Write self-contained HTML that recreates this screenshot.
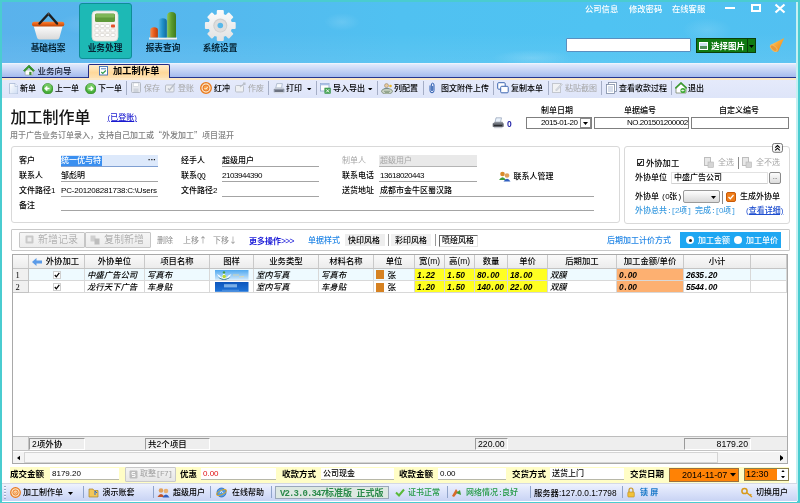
<!DOCTYPE html>
<html lang="zh-CN"><head><meta charset="utf-8"><title>加工制作单</title>
<style>
*{box-sizing:border-box;margin:0;padding:0}
html,body{width:800px;height:503px;overflow:hidden;background:#fff}
body{font-family:"Liberation Sans","Noto Sans CJK SC","DejaVu Sans",sans-serif;font-size:8px;color:#000;position:relative;line-height:10px;font-weight:500}
.a{position:absolute;white-space:nowrap}
.t{position:absolute;white-space:nowrap;font-size:8px;line-height:10px;height:10px}
.n{font-size:8px;letter-spacing:-.45px}
.m{font-family:"Liberation Mono",monospace;font-size:8px;letter-spacing:-.8px}
.d{font-size:8px;letter-spacing:0}
.p{display:inline-block;width:4.4px;text-align:center}
.q{font-family:"Noto Sans CJK SC",sans-serif;line-height:0}
.b{font-weight:bold}
.g{color:#a6a6a6;font-weight:400}
#win{position:absolute;left:0;top:0;width:800px;height:503px;background:#4accd0;overflow:hidden;will-change:transform}
#hdr{position:absolute;left:2px;top:2px;width:795px;height:61px;background:radial-gradient(ellipse 40px 12px at 95px 22px,rgba(255,255,255,.13),rgba(255,255,255,0)),radial-gradient(ellipse 18px 9px at 340px 20px,rgba(255,255,255,.13),rgba(255,255,255,0)),radial-gradient(ellipse 40px 8px at 530px 56px,rgba(255,255,255,.16),rgba(255,255,255,0)),radial-gradient(ellipse 25px 12px at 705px 28px,rgba(255,255,255,.12),rgba(255,255,255,0)),linear-gradient(rgba(255,255,255,0) 50%,rgba(255,255,255,.07)),linear-gradient(90deg,#5ab2ec,#55b8ee 25%,#50c1f1 50%,#4fc3f2 75%,#52c0f1)}
#tabbar{position:absolute;left:2px;top:62.7px;width:795px;height:15px;background:linear-gradient(#f4f8ff,#dde7fb 12%,#c0d0f4 55%,#a0b7ec)}
#tb{position:absolute;left:2px;top:78px;width:795px;height:20px;background:linear-gradient(#fde8c4,#fde8c4 1.500px,#e5eafb 2px,#dee5f9)}
.sep{position:absolute;width:1px;background:#a5aec6}
#content{position:absolute;left:2px;top:98px;width:795px;height:404px;background:#fff}
.ul{position:absolute;height:1px;background:#a4a4a4}
.box{position:absolute;border:1px solid #d9d9d9;border-radius:3px;background:#fff}
.inp{position:absolute;background:#fff;border:1px solid #7f7f7f}
.hc{position:absolute;top:255px;height:13px;background:linear-gradient(#fafafa,#ececec);border-right:1px solid #c9c9c9;text-align:center;font-size:8.4px;line-height:13px;white-space:nowrap;overflow:hidden}
.c{position:absolute;height:12.3px;font-size:8.4px;line-height:12.3px;white-space:nowrap;overflow:hidden;font-style:italic;padding-left:2px;border-right:1px solid #d8d8d8;border-bottom:1px solid #d8d8d8}
</style></head><body>
<div id="win">
<div id="hdr"></div>
<div class="a" style="left:79px;top:3px;width:53px;height:56px;background:#1db9b5;border:1px solid #0e8e96;border-radius:3px"></div>
<div class="t b" style="left:18px;top:43px;width:60px;text-align:center;font-size:8.7px;color:#062536">基础档案</div>
<div class="t b" style="left:75px;top:43px;width:60px;text-align:center;font-size:8.7px;color:#062536">业务处理</div>
<div class="t b" style="left:133px;top:43px;width:60px;text-align:center;font-size:8.7px;color:#062536">报表查询</div>
<div class="t b" style="left:190px;top:43px;width:60px;text-align:center;font-size:8.7px;color:#062536">系统设置</div>
<svg class="a" style="left:30px;top:9px" width="36" height="32" viewBox="0 0 36 32">
<defs><linearGradient id="bk" x1="0" y1="0" x2="0" y2="1"><stop offset="0" stop-color="#fdfdfd"/><stop offset="1" stop-color="#d9d9d9"/></linearGradient>
<linearGradient id="rm" x1="0" y1="0" x2="0" y2="1"><stop offset="0" stop-color="#f5843a"/><stop offset=".5" stop-color="#e85f14"/><stop offset="1" stop-color="#b9480c"/></linearGradient></defs>
<path d="M3.500 16.500 H32.800 L29.500 28.500 Q29 30.500 27 30.500 H9.500 Q7.500 30.500 7 28.500 Z" fill="url(#bk)"/>
<rect x="2" y="12.700" width="32.300" height="4.800" rx="2.200" fill="url(#rm)"/>
<path d="M9.500 14.500 L18.500 4.700 L27 14.500" fill="none" stroke="#1f1f1f" stroke-width="2.400" stroke-linejoin="round" stroke-linecap="round"/>
<circle cx="18.500" cy="4.700" r="1" fill="#555"/>
</svg>
<svg class="a" style="left:91px;top:10px" width="28" height="32" viewBox="0 0 28 32">
<rect x="1" y="1" width="26" height="30" rx="4" fill="#f4f2ee" stroke="#d8d5cf" stroke-width=".8"/>
<rect x="4" y="3.500" width="20" height="8.500" rx="1.500" fill="#5f9a3a"/>
<rect x="4.500" y="4" width="19" height="3.500" rx="1" fill="#7fb657"/>
<g fill="#fff" stroke="#c9c5be" stroke-width=".5">
<rect x="4" y="14.500" width="4" height="3" rx=".8"/><rect x="9.300" y="14.500" width="4" height="3" rx=".8"/><rect x="14.600" y="14.500" width="4" height="3" rx=".8"/>
<rect x="4" y="19" width="4" height="3" rx=".8"/><rect x="9.300" y="19" width="4" height="3" rx=".8"/><rect x="14.600" y="19" width="4" height="3" rx=".8"/><rect x="20" y="19" width="4" height="3" rx=".8"/>
<rect x="4" y="23.500" width="4" height="3" rx=".8"/><rect x="9.300" y="23.500" width="4" height="3" rx=".8"/><rect x="14.600" y="23.500" width="4" height="3" rx=".8"/><rect x="20" y="23.500" width="4" height="3" rx=".8"/>
</g>
<rect x="20" y="14.500" width="4" height="3" rx=".8" fill="#e2512a"/>
</svg>
<svg class="a" style="left:148px;top:10px" width="30" height="31" viewBox="0 0 30 31">
<defs><linearGradient id="b1" x1="0" y1="0" x2="1" y2="0"><stop offset="0" stop-color="#f58a4a"/><stop offset=".5" stop-color="#e85a1a"/><stop offset="1" stop-color="#b8400c"/></linearGradient>
<linearGradient id="b2" x1="0" y1="0" x2="1" y2="0"><stop offset="0" stop-color="#4fb4e4"/><stop offset=".5" stop-color="#1f8fc8"/><stop offset="1" stop-color="#146a9c"/></linearGradient>
<linearGradient id="b3" x1="0" y1="0" x2="1" y2="0"><stop offset="0" stop-color="#8ac452"/><stop offset=".5" stop-color="#5a9a2c"/><stop offset="1" stop-color="#3f7a1c"/></linearGradient></defs>
<rect x="1" y="27.500" width="28" height="2" fill="#f2f2f2"/><rect x="1" y="29.300" width="28" height=".7" fill="#b9c4cc"/>
<path d="M2.300 27.500 V20 Q2.300 17.200 6.100 17.200 Q9.900 17.200 9.900 20 V27.500Z" fill="url(#b1)"/>
<path d="M10.600 27.500 V11.500 Q10.600 8.200 14.700 8.200 Q18.800 8.200 18.800 11.500 V27.500Z" fill="url(#b2)"/>
<path d="M19.200 27.500 V5.500 Q19.200 1.900 23.600 1.900 Q28 1.900 28 5.500 V27.500Z" fill="url(#b3)"/>
</svg>
<svg class="a" style="left:204px;top:9px" width="33" height="33" viewBox="0 0 33 33">
<defs><linearGradient id="gg" x1="0" y1="0" x2="0" y2="1"><stop offset="0" stop-color="#fafafa"/><stop offset="1" stop-color="#e2e2e2"/></linearGradient></defs>
<path d="M30.68 13.99 L30.68 19.01 L27.00 19.07 L25.68 22.25 L28.24 24.90 L24.70 28.44 L22.05 25.88 L18.87 27.20 L18.81 30.88 L13.79 30.88 L13.73 27.20 L10.55 25.88 L7.90 28.44 L4.36 24.90 L6.92 22.25 L5.60 19.07 L1.92 19.01 L1.92 13.99 L5.60 13.93 L6.92 10.75 L4.36 8.10 L7.90 4.56 L10.55 7.12 L13.73 5.80 L13.79 2.12 L18.81 2.12 L18.87 5.80 L22.05 7.12 L24.70 4.56 L28.24 8.10 L25.68 10.75 L27.00 13.93Z" fill="url(#gg)" stroke="url(#gg)" stroke-width="2" stroke-linejoin="round"/>
<circle cx="16.300" cy="16.500" r="7" fill="#cfcfcf"/><circle cx="16.300" cy="16.800" r="6" fill="#dedede"/><circle cx="16.300" cy="16.500" r="2.800" fill="#58b8ea"/>
</svg>
<div class="t " style="left:585px;top:3.6px;color:#fff;font-size:8.3px">公司信息</div>
<div class="t " style="left:629px;top:3.6px;color:#fff;font-size:8.3px">修改密码</div>
<div class="t " style="left:672px;top:3.6px;color:#fff;font-size:8.3px">在线客服</div>
<div class="a" style="left:725px;top:7px;width:10px;height:2px;background:#fff"></div>
<div class="a" style="left:750.5px;top:3.5px;width:10.5px;height:8.5px;border:2px solid #fff"></div>
<svg class="a" style="left:774px;top:3px" width="12" height="11" viewBox="0 0 12 11"><path d="M1.500 1.500 L10.500 9.500 M10.500 1.500 L1.500 9.500" stroke="#fff" stroke-width="2.200"/></svg>
<div class="a" style="left:566px;top:38px;width:125px;height:14px;background:#fff;border:1px solid #5a8fc0;border-radius:1px"></div>
<div class="a" style="left:696px;top:38px;width:60px;height:14.500px;background:#107a12;border:1px solid #0a3f0c"></div>
<div class="a" style="left:746.5px;top:39px;width:1px;height:12.500px;background:#0a3f0c"></div>
<div class="a" style="left:698.500px;top:41.500px;width:9px;height:8px;background:#cfe0ee;border:1px solid #fff"><div style="position:absolute;left:0;bottom:0;width:7px;height:3px;background:#4f8f5a"></div></div>
<div class="t b" style="left:711px;top:40.5px;color:#fff;font-size:8.5px">选择图片</div>
<svg class="a" style="left:749px;top:44.500px" width="5" height="3"><path d="M0 0H5L2.500 3Z" fill="#000"/></svg>
<svg class="a" style="left:768px;top:36px" width="18" height="18" viewBox="0 0 18 18">
<defs><linearGradient id="cn" x1="0" y1="0" x2="1" y2="1"><stop offset="0" stop-color="#fde2a0"/><stop offset=".45" stop-color="#f7a93a"/><stop offset="1" stop-color="#e8841a"/></linearGradient></defs>
<path d="M16.300 2 L2.300 9 Q3 15 10 15.800 Z" fill="url(#cn)"/>
<ellipse cx="5.800" cy="12.200" rx="2.600" ry="4.600" transform="rotate(-48 5.800 12.200)" fill="#f5b55a"/>
<ellipse cx="5.800" cy="12.200" rx="1.600" ry="3.500" transform="rotate(-48 5.800 12.200)" fill="#e89a3a"/>
</svg>
<div id="tabbar"></div>
<div class="a" style="left:2px;top:77px;width:795px;height:1px;background:#24358f"></div>
<svg class="a" style="left:22.500px;top:63.500px" width="12" height="12" viewBox="0 0 12 12"><path d="M2.200 6 H9.800 V11 H2.200Z" fill="#fdfdfd" stroke="#9aa89a" stroke-width=".6"/><path d="M.4 6.600 L6 1 L11.600 6.600 L10.300 7.600 L6 3.400 L1.700 7.600Z" fill="#3aa02c" stroke="#2a7a20" stroke-width=".5"/><path d="M6 3.400 L9.800 7 V6 L6 2.200Z" fill="#2a7a20"/><rect x="6.300" y="7.800" width="2.200" height="3.200" fill="#3d8a30"/></svg>
<div class="t " style="left:37.5px;top:65.5px;font-size:8.5px;color:#10182c">业务向导</div>
<div class="a" style="left:88px;top:64px;width:82px;height:14.500px;background:linear-gradient(#ffedcc,#ffd899 55%,#fde3b8);border:1px solid #232c84;border-bottom:none;border-radius:2px 2px 0 0"></div>
<svg class="a" style="left:99.300px;top:66px" width="9" height="9.500" viewBox="0 0 9 9.500"><rect x=".5" y=".5" width="8" height="8.500" fill="#fff" stroke="#3d6cb4" stroke-width=".9"/><path d="M2 2.800 H7" stroke="#3d6cb4" stroke-width=".9"/><path d="M2.300 6 L3.800 7.500 L6.800 4.500" fill="none" stroke="#2e9a4a" stroke-width="1.200"/></svg>
<div class="t b" style="left:113px;top:66px;font-size:9.2px;letter-spacing:.1px">加工制作单</div>
<div id="tb"></div>
<svg class="a" style="left:8.5px;top:82.5px" width="9.5" height="11.5" viewBox="0 0 9.5 11.5"><defs><linearGradient id="pg" x1="0" y1="0" x2="1" y2="1"><stop offset="0" stop-color="#ffffff"/><stop offset="1" stop-color="#cddcf3"/></linearGradient></defs><path d="M.5 .5 H6 L9 3.500 V11 H.5Z" fill="url(#pg)" stroke="#a9b9d4" stroke-width=".8"/><path d="M6 .5 V3.500 H9" fill="#eef3fb" stroke="#a9b9d4" stroke-width=".6"/></svg>
<div class="t " style="left:20px;top:83.6px;">新单</div>
<svg class="a" style="left:41.7px;top:82.7px" width="11.5" height="11.5" viewBox="0 0 11.5 11.5"><circle cx="5.750" cy="5.750" r="5.300" fill="#46ac38" stroke="#3a8a2e" stroke-width=".7"/><circle cx="5.750" cy="4.400" r="3.900" fill="#8ad878" opacity=".65"/><path d="M7.500 5.500 H3.500 M5.300 3.500 L3.300 5.500 L5.300 7.500" fill="none" stroke="#fff" stroke-width="1.500"/></svg>
<div class="t " style="left:55px;top:83.6px;">上一单</div>
<svg class="a" style="left:84.7px;top:82.7px" width="11.5" height="11.5" viewBox="0 0 11.5 11.5"><circle cx="5.750" cy="5.750" r="5.300" fill="#46ac38" stroke="#3a8a2e" stroke-width=".7"/><circle cx="5.750" cy="4.400" r="3.900" fill="#8ad878" opacity=".65"/><path d="M3.500 5.500 H7.500 M5.700 3.500 L7.700 5.500 L5.700 7.500" fill="none" stroke="#fff" stroke-width="1.500"/></svg>
<div class="t " style="left:98px;top:83.6px;">下一单</div>
<div class="sep" style="left:126px;top:81px;height:14px"></div>
<svg class="a" style="left:131px;top:82px" width="10" height="11" viewBox="0 0 10 11"><rect x=".5" y=".5" width="9" height="10" rx="1" fill="#e6e9ee" stroke="#b3b9c4"/><rect x="2.500" y="1" width="5" height="3.500" fill="#fff" stroke="#c4c9d2" stroke-width=".5"/><rect x="2.500" y="6.500" width="5" height="3.500" fill="#cfd4dc"/></svg>
<div class="t g" style="left:144px;top:83.6px;">保存</div>
<svg class="a" style="left:165px;top:82px" width="11" height="11" viewBox="0 0 11 11"><rect x=".5" y="3" width="8.500" height="7" rx="1" fill="#eceef2" stroke="#b7bcc6"/><path d="M3 6.500 L4.500 8 L10 1.500" fill="none" stroke="#b7bcc6" stroke-width="1.200"/></svg>
<div class="t g" style="left:178px;top:83.6px;">登账</div>
<svg class="a" style="left:200px;top:82px" width="12" height="12" viewBox="0 0 12 12"><circle cx="6" cy="6" r="5.300" fill="#fbe3c0" stroke="#e8791c" stroke-width="1.300"/><circle cx="6" cy="6" r="3" fill="#f7a24a" stroke="#e2681a" stroke-width=".8"/><path d="M4.500 6 L5.700 7.200 L7.800 4.800" stroke="#fff" fill="none" stroke-width=".9"/></svg>
<div class="t " style="left:214px;top:83.6px;">红冲</div>
<svg class="a" style="left:235px;top:82px" width="11" height="11" viewBox="0 0 11 11"><rect x=".5" y="3.500" width="8" height="6.500" rx="1" fill="#eef0f3" stroke="#bcc1ca"/><path d="M5 5 L10 1 M8 1 H10 V3" fill="none" stroke="#bcc1ca" stroke-width="1.100"/></svg>
<div class="t g" style="left:248px;top:83.6px;">作废</div>
<div class="sep" style="left:268px;top:81px;height:14px"></div>
<svg class="a" style="left:272.5px;top:82.5px" width="12" height="11.5" viewBox="0 0 12 11.5"><path d="M3.800 .6 L9.300 .6 L8.500 5 L2.800 5Z" fill="#f6f9fd" stroke="#8f9db5" stroke-width=".6"/><path d="M.8 6 L3 4.500 H10.300 L11.300 6 V9 H.8Z" fill="#c4cad6"/><path d="M.8 6 H11.300 V9.300 H.8Z" fill="#8e96a6"/><rect x="2" y="7.500" width="8" height="1" fill="#4a4f5a"/><path d="M1.500 9.500 H10.600 L9.800 10.800 H2.300Z" fill="#dfe2e8"/></svg>
<div class="t " style="left:286px;top:83.6px;">打印</div>
<svg class="a" style="left:307.2px;top:87.5px" width="4.4" height="2.6" viewBox="0 0 4.4 2.6"><path d="M0 0H4.400L2.200 2.600Z" fill="#000"/></svg>
<div class="sep" style="left:316px;top:81px;height:14px"></div>
<svg class="a" style="left:320px;top:82.5px" width="11" height="11" viewBox="0 0 11 11"><rect x=".5" y=".5" width="8.500" height="7.500" fill="#fdfdfd" stroke="#8fa6cc" stroke-width=".8"/><rect x=".5" y=".5" width="8.500" height="1.800" fill="#a9c0e4"/><rect x="4.800" y="5" width="5.700" height="5.500" fill="#4aa858" stroke="#2f8a40" stroke-width=".5"/><path d="M6.200 6.300 L9.100 9.300 M9.100 6.300 L6.200 9.300" stroke="#fff" stroke-width=".9"/></svg>
<div class="t " style="left:333px;top:83.6px;">导入导出</div>
<svg class="a" style="left:368.2px;top:87.5px" width="4.4" height="2.6" viewBox="0 0 4.4 2.6"><path d="M0 0H4.400L2.200 2.600Z" fill="#000"/></svg>
<div class="sep" style="left:377px;top:81px;height:14px"></div>
<svg class="a" style="left:381px;top:82.5px" width="12" height="11.5" viewBox="0 0 12 11.5"><circle cx="5.500" cy="2.600" r="2" fill="#e8c9a0" stroke="#8a7a5a" stroke-width=".5"/><path d="M1.500 7 Q5.500 2.500 9.500 7Z" fill="#5a8ac8"/><ellipse cx="6" cy="8.300" rx="5.500" ry="2.800" fill="#c9d2c4" stroke="#6f7f6a" stroke-width=".7"/><path d="M3 8.300 H9 M4 9.600 H8" stroke="#5f7a5a" stroke-width=".6"/><circle cx="9.500" cy="3" r="1.300" fill="#e8b82a"/></svg>
<div class="t " style="left:394px;top:83.6px;">列配置</div>
<div class="sep" style="left:423px;top:81px;height:14px"></div>
<svg class="a" style="left:428px;top:82px" width="8" height="12" viewBox="0 0 8 12"><path d="M2 3.500 V8.500 Q2 10.800 4 10.800 Q6 10.800 6 8.500 V3 Q6 1.200 4.500 1.200 Q3.300 1.200 3.300 3 V8 Q3.300 8.800 4 8.800 Q4.700 8.800 4.700 8 V4" fill="none" stroke="#2f5fb0" stroke-width="1"/></svg>
<div class="t " style="left:441px;top:83.6px;">图文附件上传</div>
<div class="sep" style="left:493px;top:81px;height:14px"></div>
<svg class="a" style="left:497px;top:82px" width="12" height="12" viewBox="0 0 12 12"><rect x=".7" y=".7" width="7.500" height="6.500" rx="1" fill="#fff" stroke="#3d66b0" stroke-width="1"/><rect x="3.700" y="4.300" width="7.500" height="6.500" rx="1" fill="#fff" stroke="#3d66b0" stroke-width="1"/></svg>
<div class="t " style="left:511px;top:83.6px;">复制本单</div>
<div class="sep" style="left:548px;top:81px;height:14px"></div>
<svg class="a" style="left:552px;top:82px" width="11" height="11" viewBox="0 0 11 11"><rect x=".5" y="1.500" width="8" height="9" fill="#f1f2f4" stroke="#c3c7cf"/><path d="M3.500 8 L9.500 1.500 L10.500 2.500 L4.500 9Z" fill="#d9dce2" stroke="#b7bcc6" stroke-width=".5"/></svg>
<div class="t g" style="left:565px;top:83.6px;">粘贴截图</div>
<div class="sep" style="left:601px;top:81px;height:14px"></div>
<svg class="a" style="left:606px;top:82px" width="11" height="12" viewBox="0 0 11 12"><rect x="2.500" y=".5" width="8" height="9" fill="#fff" stroke="#7d8aa3" stroke-width=".8"/><rect x=".5" y="2.500" width="8" height="9" fill="#fff" stroke="#7d8aa3" stroke-width=".8"/><path d="M2 5 H7 M2 7 H7 M2 9 H7" stroke="#8fa3c7" stroke-width=".7"/></svg>
<div class="t " style="left:619px;top:83.6px;">查看收款过程</div>
<div class="sep" style="left:671px;top:81px;height:14px"></div>
<svg class="a" style="left:675px;top:82px" width="12" height="12" viewBox="0 0 12 12"><path d="M1 6 L6 1.500 L11 6 V11 H1Z" fill="#fff" stroke="#6b7a5a" stroke-width=".7"/><path d="M.3 6.300 L6 1 L11.700 6.300" fill="none" stroke="#3c9a30" stroke-width="1.700"/><circle cx="8" cy="8.500" r="2.600" fill="#3faa35"/><path d="M9.300 8.500 H6.800 M7.800 7.500 L6.800 8.500 L7.800 9.500" stroke="#fff" stroke-width=".8" fill="none"/></svg>
<div class="t " style="left:688px;top:83.6px;">退出</div>
<div id="content"></div>
<div class="a" style="left:796px;top:2px;width:1.5px;height:499px;background:#c4f0f2"></div>
<div class="t" style="left:10.5px;top:107px;font-size:16px;line-height:22px;height:22px;font-weight:500;color:#161616">加工制作单</div>
<div class="t " style="left:107.5px;top:112.5px;color:#1a1ad0;text-decoration:underline;font-size:8px">(已登账)</div>
<div class="t " style="left:10px;top:130.5px;color:#808080;letter-spacing:0px">用于广告业务订单录入，支持自己加工或<span class="q">“</span>外发加工<span class="q">”</span>项目混开</div>
<div class="t " style="left:541px;top:105.5px;">制单日期</div>
<div class="t " style="left:624px;top:105.5px;">单据编号</div>
<div class="t " style="left:719px;top:105.5px;">自定义编号</div>
<div class="inp" style="left:526px;top:117px;width:66px;height:12px"></div>
<div class="inp" style="left:594px;top:117px;width:95px;height:12px"></div>
<div class="inp" style="left:691px;top:117px;width:98px;height:12px"></div>
<div class="t n" style="left:541px;top:118px;">2015-01-20</div>
<div class="a" style="left:579.5px;top:118px;width:11.5px;height:10px;background:#fff;border:1px solid #8a8a8a"></div>
<svg class="a" style="left:582.7px;top:122px" width="5" height="3" viewBox="0 0 5 3"><path d="M0 0H5L2.500 3Z" fill="#000"/></svg>
<div class="t n" style="left:627px;top:118px;">NO.201501200002</div>
<svg class="a" style="left:492px;top:117px" width="12" height="12" viewBox="0 0 12 12"><path d="M4 .8 L9.500 .8 L8.500 5.500 L3 5.500Z" fill="#eaf2fb" stroke="#7f8fa8" stroke-width=".6"/><path d="M.8 6.500 L3 4.800 H10.500 L11.500 6.500 V9.500 H.8Z" fill="#8a8f98"/><path d="M.8 6.500 H11.500 V9.800 H.8Z" fill="#5c6068"/><rect x="2" y="8" width="8" height="1.200" fill="#2a2c30"/><path d="M1.500 10 H10.800 L10 11.300 H2.300Z" fill="#c9ccd2"/></svg>
<div class="t b" style="left:507px;top:118.5px;color:#2424a8;font-size:8.5px">0</div>
<div class="box" style="left:11px;top:146px;width:609px;height:77px"></div>
<div class="box" style="left:624px;top:146px;width:166px;height:78px"></div>
<div class="t " style="left:19px;top:155.5px;">客户</div>
<div class="t " style="left:19px;top:170.5px;">联系人</div>
<div class="t " style="left:19px;top:185.6px;">文件路径1</div>
<div class="t " style="left:19px;top:200.5px;">备注</div>
<div class="a" style="left:60.5px;top:155px;width:97.5px;height:11px;background:#dde9fb"></div>
<div class="a" style="left:60.5px;top:155.5px;width:41.5px;height:10px;background:#3a8ff0"></div>
<div class="t " style="left:61px;top:155.5px;color:#fff">统一优与特</div>
<div class="t b" style="left:148px;top:154.5px;">···</div>
<div class="t " style="left:61px;top:170.5px;">邹彪明</div>
<div class="t " style="left:61px;top:185.6px;letter-spacing:-.2px">PC-201208281738:C:\Users</div>
<div class="ul" style="left:60.5px;top:166px;width:97.5px;background:#7f9fd2"></div>
<div class="ul" style="left:61px;top:181px;width:97px"></div>
<div class="ul" style="left:61px;top:196px;width:97px"></div>
<div class="ul" style="left:61px;top:210px;width:533px"></div>
<div class="t " style="left:181px;top:155.5px;">经手人</div>
<div class="t " style="left:181px;top:170.5px;">联系<span class="m">QQ</span></div>
<div class="t " style="left:181px;top:185.6px;">文件路径2</div>
<div class="t " style="left:222px;top:155.5px;">超级用户</div>
<div class="t n" style="left:222px;top:170.5px;">2103944390</div>
<div class="ul" style="left:222px;top:166px;width:97px"></div>
<div class="ul" style="left:222px;top:181px;width:97px"></div>
<div class="ul" style="left:222px;top:196px;width:97px"></div>
<div class="t g" style="left:342px;top:155.5px;">制单人</div>
<div class="t " style="left:342px;top:170.5px;">联系电话</div>
<div class="t " style="left:342px;top:185.6px;">送货地址</div>
<div class="a" style="left:379px;top:155px;width:97.5px;height:12px;background:#e9e9e9;border-bottom:1px solid #b4b4b4"></div>
<div class="t g" style="left:380px;top:155.5px;">超级用户</div>
<div class="t n" style="left:380px;top:170.5px;">13618020443</div>
<div class="t " style="left:380px;top:185.6px;">成都市金牛区蜀汉路</div>
<div class="ul" style="left:379px;top:181px;width:98px"></div>
<div class="ul" style="left:379px;top:196px;width:215px"></div>
<svg class="a" style="left:499px;top:171.3px" width="12" height="11" viewBox="0 0 12 11"><circle cx="3.500" cy="3" r="2.300" fill="#d98a2a"/><path d="M0 9 Q3.500 3.500 7 9Z" fill="#3f9a3a"/><circle cx="8" cy="4.500" r="2.300" fill="#e0a05a"/><path d="M4.500 10.500 Q8 5 11.500 10.500Z" fill="#2f5fc0"/></svg>
<div class="t " style="left:513.5px;top:171.5px;">联系人管理</div>
<svg class="a" style="left:772px;top:142.5px" width="11" height="10" viewBox="0 0 11 10"><rect x=".5" y=".5" width="10" height="8.800" rx="2" fill="#f6f6f6" stroke="#666" stroke-width=".9"/><path d="M3.200 4.600 L5.500 2.500 L7.800 4.600 M3.200 7.300 L5.500 5.200 L7.800 7.300" fill="none" stroke="#000" stroke-width="1.100"/></svg>
<div class="a" style="left:636.5px;top:159px;width:7px;height:7px;background:#fff;border:1px solid #333"></div>
<svg class="a" style="left:637px;top:159.5px" width="6" height="6" viewBox="0 0 6 6"><path d="M1 3 L2.300 4.400 L5 1.200" fill="none" stroke="#000" stroke-width="1.100"/></svg>
<div class="t " style="left:646px;top:157.5px;font-size:8.3px">外协加工</div>
<svg class="a" style="left:704px;top:157px" width="10" height="11" viewBox="0 0 10 11"><rect x=".5" y=".5" width="6" height="8" fill="#e8e8e8" stroke="#bdbdbd"/><rect x="4" y="5" width="5.500" height="5.500" fill="#d5d5d5" stroke="#b5b5b5" stroke-width=".6"/></svg>
<div class="t g" style="left:718px;top:157.5px;">全选</div>
<div class="sep" style="left:738px;top:157px;height:12px;background:#888"></div>
<svg class="a" style="left:742px;top:157px" width="10" height="11" viewBox="0 0 10 11"><rect x=".5" y=".5" width="6" height="8" fill="#e8e8e8" stroke="#bdbdbd"/><rect x="4" y="5" width="5.500" height="5.500" fill="#d5d5d5" stroke="#b5b5b5" stroke-width=".6"/></svg>
<div class="t g" style="left:756px;top:157.5px;">全不选</div>
<div class="t " style="left:635px;top:172.5px;">外协单位</div>
<div class="a" style="left:671px;top:172px;width:97px;height:12px;border:1px solid #e2e2e2;border-bottom-color:#cfcfcf;border-radius:1px;background:#fff"></div>
<div class="t " style="left:674px;top:172.5px;">中盛广告公司</div>
<div class="a" style="left:769px;top:172px;width:12px;height:12px;border:1px solid #8a8a8a;border-radius:2px;background:linear-gradient(#fdfdfd,#dcdcdc);font-size:6px;line-height:8px;text-align:center">...</div>
<div class="t " style="left:635px;top:191.5px;">外协单 <span class="m">(</span><span class="n">0</span>张<span class="m">)</span></div>
<div class="a" style="left:683px;top:190px;width:37px;height:13px;border:1px solid #9a9a9a;border-radius:2px;background:linear-gradient(#fefefe,#d9d9d9)"></div>
<svg class="a" style="left:711px;top:195.5px" width="5" height="3" viewBox="0 0 5 3"><path d="M0 0H5L2.500 3Z" fill="#000"/></svg>
<div class="sep" style="left:722px;top:190.5px;height:13px;background:#888"></div>
<svg class="a" style="left:726px;top:192px" width="10" height="10" viewBox="0 0 10 10"><rect x=".5" y=".5" width="9" height="9" rx="1.500" fill="#ef7d1a" stroke="#c85a08"/><path d="M2.500 5 L4.300 6.800 L7.500 3" fill="none" stroke="#fff" stroke-width="1.300"/></svg>
<div class="t " style="left:740px;top:191.5px;">生成外协单</div>
<div class="t " style="left:635px;top:205.5px;color:#3a9be0">外协总共<span class="m">:[</span><span class="n">2</span>项<span class="m">] </span>完成<span class="m">:[</span><span class="n">0</span>项<span class="m">]</span></div>
<div class="t " style="left:746px;top:205.5px;color:#1f4fd0;text-decoration:underline">(查看详细)</div>
<div class="box" style="left:11px;top:229px;width:778.5px;height:22px;border-radius:1px;border-color:#c9c9c9"></div>
<div class="a" style="left:19px;top:232px;width:66px;height:16px;border:1px solid #c6c6c6;border-radius:1px;background:linear-gradient(#f6f6f6,#ececec)"></div>
<div class="a" style="left:85px;top:232px;width:66px;height:16px;border:1px solid #c6c6c6;border-radius:1px;background:linear-gradient(#f6f6f6,#ececec)"></div>
<svg class="a" style="left:25px;top:235px" width="9" height="9" viewBox="0 0 9 9"><rect x=".5" y=".5" width="8" height="8" rx="1" fill="#c9c9c9"/><rect x="2.500" y="2.500" width="4" height="4" fill="#eee"/></svg>
<div class="t g" style="left:38px;top:234px;font-size:10px;line-height:12px;height:12px;font-weight:300;color:#9a9a9a">新增记录</div>
<svg class="a" style="left:90px;top:235px" width="10" height="10" viewBox="0 0 10 10"><rect x=".5" y=".5" width="5" height="6" fill="#d0d0d0"/><rect x="4.500" y="3.500" width="5" height="6" fill="#bdbdbd"/></svg>
<div class="t g" style="left:104px;top:234px;font-size:10px;line-height:12px;height:12px;font-weight:300;color:#9a9a9a">复制新增</div>
<div class="t g" style="left:157px;top:236px;color:#8c8c8c">删除</div>
<div class="t g" style="left:183px;top:236px;color:#8c8c8c">上移<span class="q">↑</span></div>
<div class="t g" style="left:213px;top:236px;color:#8c8c8c">下移<span class="q">↓</span></div>
<div class="t b" style="left:249px;top:236px;color:#1a1ad8">更多操作<span style="font-weight:normal;font-size:8.5px;letter-spacing:-.7px">&gt;&gt;&gt;</span></div>
<div class="t " style="left:308px;top:236px;color:#2286e6">单据样式</div>
<div class="a" style="left:345px;top:234px;width:40px;height:12px;background:#eeeeee"></div>
<div class="t " style="left:348px;top:236px;">快印风格</div>
<div class="sep" style="left:388px;top:234px;height:12px;background:#999"></div>
<div class="a" style="left:391px;top:234px;width:40px;height:12px;background:#f1f1f1"></div>
<div class="t " style="left:395px;top:236px;">彩印风格</div>
<div class="sep" style="left:435px;top:234px;height:12px;background:#999"></div>
<div class="a" style="left:438.5px;top:234.5px;width:39px;height:12px;background:#fff;border:1px solid #666;border-right-color:#e4e4e4;border-bottom-color:#e4e4e4"></div>
<div class="t " style="left:442px;top:236px;">喷绘风格</div>
<div class="t " style="left:607px;top:236px;color:#2286e6">后期加工计价方式</div>
<div class="a" style="left:680px;top:232px;width:101px;height:16px;background:#1fa7f2"></div>
<div class="a" style="left:686px;top:236px;width:8px;height:8px;border-radius:4px;background:#fff"><div style="position:absolute;left:2.500px;top:2.500px;width:3px;height:3px;border-radius:2px;background:#222"></div></div>
<div class="t " style="left:698px;top:235.5px;color:#fff">加工金额</div>
<div class="a" style="left:734px;top:236px;width:8px;height:8px;border-radius:4px;background:#fff"></div>
<div class="t " style="left:746px;top:235.5px;color:#fff">加工单价</div>
<div class="a" style="left:11.5px;top:254px;width:776.5px;height:209.5px;border:1px solid #a9a9a9;background:#fff"></div>
<div class="a" style="left:12.5px;top:255px;width:774.5px;height:13.5px;background:#efefef;border-bottom:1px solid #c4c4c4"></div>
<div class="hc" style="left:12.5px;width:16.5px;"></div>
<div class="hc" style="left:29px;width:56px;padding-left:12px;">外协加工</div>
<div class="hc" style="left:85px;width:60px;">外协单位</div>
<div class="hc" style="left:145px;width:65px;">项目名称</div>
<div class="hc" style="left:210px;width:44px;">图样</div>
<div class="hc" style="left:254px;width:65px;">业务类型</div>
<div class="hc" style="left:319px;width:55px;">材料名称</div>
<div class="hc" style="left:374px;width:41px;">单位</div>
<div class="hc" style="left:415px;width:30px;">宽(m)</div>
<div class="hc" style="left:445px;width:30px;">高(m)</div>
<div class="hc" style="left:475px;width:33px;">数量</div>
<div class="hc" style="left:508px;width:40px;">单价</div>
<div class="hc" style="left:548px;width:69px;">后期加工</div>
<div class="hc" style="left:617px;width:67px;">加工金额/单价</div>
<div class="hc" style="left:684px;width:67px;">小计</div>
<div class="hc" style="left:751px;width:36px;"></div>
<svg class="a" style="left:32px;top:258px" width="10" height="8" viewBox="0 0 10 8"><path d="M0 4 L4.500 0 V2.500 H10 V5.500 H4.500 V8Z" fill="#5b9be8"/></svg>
<div class="c" style="left:12.5px;top:268.5px;width:16.5px;background:#f0f0f0;font-style:normal;border-color:#c4c4c4;padding-left:3px;font-family:'Liberation Serif',serif;font-size:8.5px">1</div>
<div class="c" style="left:29px;top:268.5px;width:56px;background:#eefaff;"></div>
<div class="c" style="left:85px;top:268.5px;width:60px;background:#eefaff;">中盛广告公司</div>
<div class="c" style="left:145px;top:268.5px;width:65px;background:#eefaff;">写真布</div>
<div class="c" style="left:210px;top:268.5px;width:44px;background:#eefaff;"></div>
<div class="c" style="left:254px;top:268.5px;width:65px;background:#eefaff;">室内写真</div>
<div class="c" style="left:319px;top:268.5px;width:55px;background:#eefaff;">写真布</div>
<div class="c" style="left:374px;top:268.5px;width:41px;background:#eefaff;font-style:normal;padding-left:13.5px;font-size:8.5px;">张</div>
<div class="c n" style="left:415px;top:268.5px;width:30px;background:#ffff22;letter-spacing:-.2px;font-size:8.4px;font-weight:bold;">1<span class="p">.</span>22</div>
<div class="c n" style="left:445px;top:268.5px;width:30px;background:#ffff22;letter-spacing:-.2px;font-size:8.4px;font-weight:bold;">1<span class="p">.</span>50</div>
<div class="c n" style="left:475px;top:268.5px;width:33px;background:#ffff22;letter-spacing:-.2px;font-size:8.4px;font-weight:bold;">80<span class="p">.</span>00</div>
<div class="c n" style="left:508px;top:268.5px;width:40px;background:#ffff22;letter-spacing:-.2px;font-size:8.4px;font-weight:bold;">18<span class="p">.</span>00</div>
<div class="c" style="left:548px;top:268.5px;width:69px;background:#eefaff;">双膜</div>
<div class="c n" style="left:617px;top:268.5px;width:67px;background:#fdb071;letter-spacing:-.2px;font-size:8.4px;font-weight:bold;">0<span class="p">.</span>00</div>
<div class="c n" style="left:684px;top:268.5px;width:67px;background:#eefaff;letter-spacing:-.2px;font-size:8.4px;font-weight:bold;">2635<span class="p">.</span>20</div>
<div class="c" style="left:751px;top:268.5px;width:36px;background:#eefaff;"></div>
<div class="a" style="left:53px;top:270.5px;width:8px;height:8px;background:#fff;border:1px solid #cfcfcf"></div>
<svg class="a" style="left:54px;top:271.5px" width="6" height="6" viewBox="0 0 6 6"><path d="M.8 3 L2.300 4.800 L5.300 .8" fill="none" stroke="#000" stroke-width="1.200"/></svg>
<div class="a" style="left:375.7px;top:270.2px;width:8.5px;height:9px;background:#d68222"></div>
<div class="c" style="left:12.5px;top:280.8px;width:16.5px;background:#f0f0f0;font-style:normal;border-color:#c4c4c4;padding-left:3px;font-family:'Liberation Serif',serif;font-size:8.5px">2</div>
<div class="c" style="left:29px;top:280.8px;width:56px;background:#fff;"></div>
<div class="c" style="left:85px;top:280.8px;width:60px;background:#fff;">龙行天下广告</div>
<div class="c" style="left:145px;top:280.8px;width:65px;background:#fff;">车身贴</div>
<div class="c" style="left:210px;top:280.8px;width:44px;background:#fff;"></div>
<div class="c" style="left:254px;top:280.8px;width:65px;background:#fff;">室内写真</div>
<div class="c" style="left:319px;top:280.8px;width:55px;background:#fff;">车身贴</div>
<div class="c" style="left:374px;top:280.8px;width:41px;background:#fff;font-style:normal;padding-left:13.5px;font-size:8.5px;">张</div>
<div class="c n" style="left:415px;top:280.8px;width:30px;background:#ffff22;letter-spacing:-.2px;font-size:8.4px;font-weight:bold;">1<span class="p">.</span>20</div>
<div class="c n" style="left:445px;top:280.8px;width:30px;background:#ffff22;letter-spacing:-.2px;font-size:8.4px;font-weight:bold;">1<span class="p">.</span>50</div>
<div class="c n" style="left:475px;top:280.8px;width:33px;background:#ffff22;letter-spacing:-.2px;font-size:8.4px;font-weight:bold;">140<span class="p">.</span>00</div>
<div class="c n" style="left:508px;top:280.8px;width:40px;background:#ffff22;letter-spacing:-.2px;font-size:8.4px;font-weight:bold;">22<span class="p">.</span>00</div>
<div class="c" style="left:548px;top:280.8px;width:69px;background:#fff;">双膜</div>
<div class="c n" style="left:617px;top:280.8px;width:67px;background:#fdb071;letter-spacing:-.2px;font-size:8.4px;font-weight:bold;">0<span class="p">.</span>00</div>
<div class="c n" style="left:684px;top:280.8px;width:67px;background:#fff;letter-spacing:-.2px;font-size:8.4px;font-weight:bold;">5544<span class="p">.</span>00</div>
<div class="c" style="left:751px;top:280.8px;width:36px;background:#fff;"></div>
<div class="a" style="left:53px;top:282.8px;width:8px;height:8px;background:#fff;border:1px solid #cfcfcf"></div>
<svg class="a" style="left:54px;top:283.8px" width="6" height="6" viewBox="0 0 6 6"><path d="M.8 3 L2.300 4.800 L5.300 .8" fill="none" stroke="#000" stroke-width="1.200"/></svg>
<div class="a" style="left:375.7px;top:282.5px;width:8.5px;height:9px;background:#d68222"></div>
<svg class="a" style="left:215.3px;top:270px" width="33.500" height="9.800" viewBox="0 0 33.500 9.800"><defs><linearGradient id="t1" x1="0" y1="0" x2="0" y2="1"><stop offset="0" stop-color="#4fa8f0"/><stop offset="1" stop-color="#cfe8fb"/></linearGradient></defs><rect width="33.500" height="9.800" fill="url(#t1)"/><path d="M2 4 Q5 9.500 9 9 Q13 9.500 16.500 4 Q13 5 11.500 8 Q9 3 9 1.500 Q8.500 4 6.500 8 Q5 5 2 4Z" fill="#fff"/><path d="M3 7 Q9 11 15.500 7 Q12 10.500 9 9.500 Q6 10.500 3 7Z" fill="#1f6a7a"/><circle cx="9.200" cy="6.500" r="1.800" fill="#b8d832"/><circle cx="9" cy="2.500" r="1.200" fill="#3f9a4a"/><path d="M18 5 H24 M24 7 L29 6.500" stroke="#e8d8a0" stroke-width=".8"/></svg>
<svg class="a" style="left:215.3px;top:282.2px" width="33.500" height="9.800" viewBox="0 0 33.500 9.800"><defs><linearGradient id="t2" x1="0" y1="0" x2="0" y2="1"><stop offset="0" stop-color="#0c55bc"/><stop offset="1" stop-color="#1f74d8"/></linearGradient></defs><rect width="33.500" height="9.800" fill="url(#t2)"/><rect x="9" y="2.200" width="13" height="3.200" fill="#9cc8f0" opacity=".75"/><rect x="7" y="7.800" width="17" height=".8" fill="#7fb0e8" opacity=".7"/></svg>
<div class="a" style="left:12.5px;top:436.3px;width:774.5px;height:15.2px;background:#eeeeee;border-top:1px solid #bdbdbd;border-bottom:1px solid #c4c4c4"></div>
<div class="a" style="left:28px;top:437px;width:1px;height:14px;background:#c4c4c4"></div>
<div class="a" style="left:29px;top:438.2px;width:56px;height:11.8px;border:1px solid #9a9a9a;border-right-color:#fff;border-bottom-color:#fff;font-size:8.5px;line-height:10px;padding:0 2px;text-align:left">2项外协</div>
<div class="a" style="left:145px;top:438.2px;width:65px;height:11.8px;border:1px solid #9a9a9a;border-right-color:#fff;border-bottom-color:#fff;font-size:8.5px;line-height:10px;padding:0 2px;text-align:left">共2个项目</div>
<div class="a" style="left:475px;top:438.2px;width:33px;height:11.8px;border:1px solid #9a9a9a;border-right-color:#fff;border-bottom-color:#fff;font-size:8.5px;line-height:10px;padding:0 2px;text-align:left"><span style="font-size:8.7px">220.00</span></div>
<div class="a" style="left:684px;top:438.2px;width:67px;height:11.8px;border:1px solid #9a9a9a;border-right-color:#fff;border-bottom-color:#fff;font-size:8.5px;line-height:10px;padding:0 2px;text-align:right"><span style="font-size:8.7px">8179.20</span></div>
<div class="a" style="left:12.5px;top:451.5px;width:774.5px;height:11px;background:#f3f3f3"></div>
<div class="a" style="left:23.5px;top:452px;width:694px;height:11px;background:#f6f6f6;border:1px solid #d4d4d4"></div>
<svg class="a" style="left:16.5px;top:455px" width="3.5" height="6" viewBox="0 0 3.5 6"><path d="M4 0V6L0 3Z" fill="#000"/></svg>
<svg class="a" style="left:779.8px;top:455px" width="3.5" height="6" viewBox="0 0 3.5 6"><path d="M0 0V6L4 3Z" fill="#000"/></svg>
<div class="a" style="left:10px;top:466.5px;width:779px;height:16px;background:#fffdc6"></div>
<div class="t b" style="left:10px;top:468.7px;font-size:8.5px">成交金额</div>
<div class="a" style="left:50px;top:467.5px;width:69px;height:12.5px;background:#fff;border-bottom:1px solid #b8b8a8"></div>
<div class="t " style="left:52px;top:468.7px;color:#000"><span class="d">8179.20</span></div>
<div class="a" style="left:125px;top:467px;width:51px;height:14.5px;border:1px solid #c9c9c9;border-radius:1px;background:linear-gradient(#f4f4f4,#e6e6e6)"></div>
<svg class="a" style="left:128.5px;top:469.5px" width="9" height="9" viewBox="0 0 9 9"><rect x=".5" y=".5" width="8" height="8" rx="1" fill="#bdbdbd"/><path d="M6 2.500 H3 V4.500 H6 V6.500 H3" fill="none" stroke="#fff" stroke-width=".9"/></svg>
<div class="t g" style="left:140px;top:469.2px;color:#a0a0a0">取整<span class="m">[F7]</span></div>
<div class="t b" style="left:180px;top:468.7px;font-size:8.5px">优惠</div>
<div class="a" style="left:201px;top:467.5px;width:75px;height:12.5px;background:#fff;border-bottom:1px solid #b8b8a8"></div>
<div class="t " style="left:203px;top:468.7px;color:#e01010"><span class="d">0.00</span></div>
<div class="t b" style="left:282px;top:468.7px;font-size:8.5px">收款方式</div>
<div class="a" style="left:321px;top:467.5px;width:73px;height:12.5px;background:#fff;border-bottom:1px solid #b8b8a8"></div>
<div class="t " style="left:323px;top:468.7px;color:#000">公司现金</div>
<div class="t b" style="left:399px;top:468.7px;font-size:8.5px">收款金额</div>
<div class="a" style="left:438px;top:467.5px;width:68px;height:12.5px;background:#fff;border-bottom:1px solid #b8b8a8"></div>
<div class="t " style="left:440px;top:468.7px;color:#000"><span class="d">0.00</span></div>
<div class="t b" style="left:512px;top:468.7px;font-size:8.5px">交货方式</div>
<div class="a" style="left:550px;top:467.5px;width:74px;height:12.5px;background:#fff;border-bottom:1px solid #b8b8a8"></div>
<div class="t " style="left:552px;top:468.7px;color:#000">送货上门</div>
<div class="t b" style="left:630px;top:468.7px;font-size:8.5px">交货日期</div>
<div class="a" style="left:669px;top:467.5px;width:69.5px;height:14.5px;background:#ff8205;border:1px solid #9a7040"></div>
<div class="t " style="left:682px;top:469.7px;font-size:9px">2014-11-07</div>
<svg class="a" style="left:729.8px;top:473px" width="6" height="4" viewBox="0 0 6 4"><path d="M0 0H6L3 3.500Z" fill="#000"/></svg>
<div class="a" style="left:744px;top:467.5px;width:44.5px;height:13.5px;background:#fff;border:1px solid #8a8050"></div>
<div class="a" style="left:745px;top:468.5px;width:31.5px;height:11.5px;background:#ff8205"></div>
<div class="t " style="left:746px;top:469.2px;font-size:9px">12:30</div>
<svg class="a" style="left:780.5px;top:469.8px" width="4" height="2.5" viewBox="0 0 4 2.5"><path d="M0 2.500H4L2 0Z" fill="#000"/></svg>
<svg class="a" style="left:780.5px;top:475.8px" width="4" height="2.5" viewBox="0 0 4 2.5"><path d="M0 0H4L2 2.500Z" fill="#000"/></svg>
<div class="a" style="left:2px;top:483px;width:795px;height:18.3px;background:linear-gradient(#c4c8d4,#eef2fd 1.3px,#dfe6fb 40%,#c8d3f4);"></div>
<div class="a" style="left:3.5px;top:486px;width:2px;height:13px;background:repeating-linear-gradient(#9aa8c8 0,#9aa8c8 1px,rgba(255,255,255,.8) 1px,rgba(255,255,255,.8) 2px,rgba(0,0,0,0) 2px,rgba(0,0,0,0) 3px)"></div>
<svg class="a" style="left:10px;top:487px" width="11" height="11" viewBox="0 0 11 11"><circle cx="5.500" cy="5.500" r="4.800" fill="#fbe3c0" stroke="#e8791c" stroke-width="1.200"/><circle cx="5.500" cy="5.500" r="2.600" fill="#fcd2a4" stroke="#e8751a" stroke-width=".9"/><path d="M4.300 5.800 Q5.500 7 6.800 5.500" fill="none" stroke="#e8751a" stroke-width=".8"/></svg>
<div class="t " style="left:23px;top:488px;">加工制作单</div>
<svg class="a" style="left:67.5px;top:492px" width="5" height="3" viewBox="0 0 5 3"><path d="M0 0H5L2.500 3Z" fill="#000"/></svg>
<div class="sep" style="left:83px;top:486px;height:12px;background:#8fa3c9"></div>
<svg class="a" style="left:88px;top:487px" width="11" height="11" viewBox="0 0 11 11"><path d="M1 2 H5 L6 3.500 H10 V10 H1Z" fill="#f2c75a" stroke="#a8842a" stroke-width=".7"/><path d="M7 4 V8 M7 4 L9 6" stroke="#2a6ad0" stroke-width="1"/></svg>
<div class="t " style="left:102.5px;top:488px;">演示账套</div>
<div class="sep" style="left:153px;top:486px;height:12px;background:#8fa3c9"></div>
<svg class="a" style="left:157px;top:487px" width="13" height="11" viewBox="0 0 13 11"><circle cx="4" cy="3.500" r="2.300" fill="#e0a05a"/><path d="M.5 10 Q4 4 7.500 10Z" fill="#c0542a"/><circle cx="9" cy="4" r="2.300" fill="#e8b070"/><path d="M5.500 10.500 Q9 4.500 12.500 10.500Z" fill="#2f5fc0"/></svg>
<div class="t " style="left:173px;top:488px;">超级用户</div>
<div class="sep" style="left:210px;top:486px;height:12px;background:#8fa3c9"></div>
<svg class="a" style="left:216px;top:487px" width="11" height="11" viewBox="0 0 11 11"><circle cx="5.500" cy="5.500" r="4.500" fill="#4f9be8" stroke="#2a6ab8" stroke-width=".8"/><ellipse cx="5.500" cy="5.500" rx="5.300" ry="2" fill="none" stroke="#d8a82a" stroke-width=".9" transform="rotate(-25 5.500 5.500)"/><path d="M3.800 5.800 Q5.500 3 7.200 5.800" stroke="#fff" fill="none" stroke-width="1"/></svg>
<div class="t " style="left:232px;top:488px;">在线帮助</div>
<div class="sep" style="left:271px;top:486px;height:12px;background:#8fa3c9"></div>
<div class="a" style="left:275px;top:485.5px;width:114px;height:13.5px;background:#dde8e2;border:1px solid #9aa8b8"></div>
<div class="t b" style="left:280px;top:488px;color:#2a8a4a;font-size:9px"><span style="font-family:'Liberation Mono',monospace;letter-spacing:-.9px">V2.3.0.347</span>标准版<span style="font-family:'Liberation Mono',monospace;letter-spacing:-.9px"> </span>正式版</div>
<svg class="a" style="left:395px;top:488px" width="10" height="9" viewBox="0 0 10 9"><path d="M1 4.500 L4 7.500 L9 1.500" fill="none" stroke="#5aba3a" stroke-width="2"/></svg>
<div class="t " style="left:408px;top:488px;color:#239a45">证书正常</div>
<div class="sep" style="left:447px;top:486px;height:12px;background:#8fa3c9"></div>
<svg class="a" style="left:451px;top:487px" width="11" height="11" viewBox="0 0 11 11"><path d="M1 9 L5 2 L7 5 L3 10Z" fill="#d86a2a"/><path d="M5 6 L9 3 L10 8Z" fill="#3f9a3a"/></svg>
<div class="t " style="left:466px;top:488px;color:#239a45">网络情况<span class="m">:</span>良好</div>
<div class="sep" style="left:530px;top:486px;height:12px;background:#8fa3c9"></div>
<div class="t " style="left:534px;top:488px;font-size:8.3px">服务器:127.0.0.1:7798</div>
<div class="sep" style="left:622px;top:486px;height:12px;background:#8fa3c9"></div>
<svg class="a" style="left:627px;top:487px" width="8" height="11" viewBox="0 0 8 11"><path d="M2 5 V3.500 Q2 1 4 1 Q6 1 6 3.500 V5" fill="none" stroke="#c89a2a" stroke-width="1.200"/><rect x=".8" y="5" width="6.500" height="5" rx=".8" fill="#f2c23a" stroke="#b8861a" stroke-width=".6"/></svg>
<div class="t b" style="left:640px;top:488px;color:#1878c8">锁 屏</div>
<svg class="a" style="left:741px;top:487px" width="12" height="11" viewBox="0 0 12 11"><circle cx="3.500" cy="4" r="2.600" fill="none" stroke="#d89a1a" stroke-width="1.500"/><path d="M5.500 5.500 L11 10 M9 8.500 L10.300 7.200" stroke="#d89a1a" stroke-width="1.400"/></svg>
<div class="t " style="left:756px;top:488px;">切换用户</div>
</div>
</body></html>
